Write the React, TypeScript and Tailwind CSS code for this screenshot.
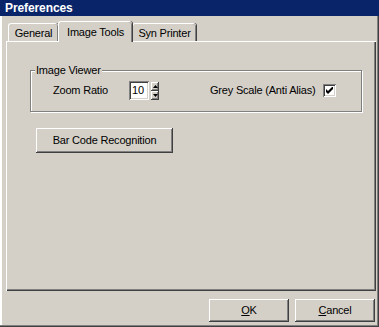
import React from "react";

const raised =
  "bg-[#d4d0c8] shadow-[inset_-1px_-1px_#404040,inset_1px_1px_#fff,inset_-2px_-2px_#808080,inset_2px_2px_#d4d0c8]";
const sunken =
  "shadow-[inset_1px_1px_#808080,inset_-1px_-1px_#fff,inset_2px_2px_#404040,inset_-2px_-2px_#d4d0c8]";

const Tab = ({ label, active, width }: { label: string; active?: boolean; width: string }) => (
  <div
    className={`${width} relative flex justify-center rounded-t-[3px] border-l border-t border-white shadow-[inset_-1px_0_#808080,1px_0_#404040] ${
      active ? "z-10 -mb-px h-[21px] pt-[4px]" : "h-[18px] pt-[3px]"
    } bg-[#d4d0c8]`}
  >
    {label}
  </div>
);

const SpinButton = ({ up }: { up?: boolean }) => (
  <div className={`flex h-[9px] w-[8px] items-center justify-center ${raised}`}>
    <svg width="5" height="3" viewBox="0 0 5 3">
      {up ? <path d="M2.5 0 L5 3 L0 3 Z" fill="#000" /> : <path d="M0 0 L5 0 L2.5 3 Z" fill="#000" />}
    </svg>
  </div>
);

export default function App() {
  return (
    <div
      className="flex h-[327px] w-[379px] flex-col bg-[#d4d0c8] text-[11px] leading-[13px] tracking-[-0.2px] text-black shadow-[inset_-1px_-1px_#404040,inset_-2px_-2px_#808080,inset_2px_0_#fff]"
      style={{ fontFamily: '"Liberation Sans", Arial, sans-serif' }}
    >
      <div className="flex h-[16px] items-center bg-[#0a246a] pl-[5px] text-[12px] font-bold tracking-[-0.1px] text-white">
        Preferences
      </div>

      <div className="flex flex-col pl-[6px] pr-[3px] pt-[5px]">
        <div className="flex h-[20px] items-end pl-[2px]">
          <Tab label="General" width="w-[50px]" />
          <Tab label="Image Tools" width="w-[74px]" active />
          <Tab label="Syn Printer" width="w-[64px]" />
        </div>

        <div className="h-[250px] border-l border-t border-white pl-[23px] pt-[28px] shadow-[inset_-1px_-1px_#404040,inset_-2px_-2px_#808080]">
          <div className="relative h-[42px] w-[332px] border border-[#808080] shadow-[1px_1px_#fff,inset_1px_1px_#fff]">
            <span className="absolute left-[4px] top-[-7px] bg-[#d4d0c8] px-[1px]">Image Viewer</span>
            <div className="flex items-center pl-[22px] pt-[10px]">
              <span className="w-[76px]">Zoom Ratio</span>
              <div className={`flex h-[19px] w-[20px] items-center bg-white pl-[3px] ${sunken}`}>10</div>
              <div className="ml-[2px] flex flex-col">
                <SpinButton up />
                <SpinButton />
              </div>
              <span className="ml-[51px] w-[113px]">Grey Scale (Anti Alias)</span>
              <div className={`flex h-[13px] w-[13px] items-center justify-center bg-white ${sunken}`}>
                <svg width="7" height="7" viewBox="0 0 7 7">
                  <path d="M0 2 L2 4 L7 -1 L7 2 L2 7 L0 5 Z" fill="#000" />
                </svg>
              </div>
            </div>
          </div>

          <button className={`ml-[6px] mt-[16px] flex h-[25px] w-[137px] items-center justify-center ${raised}`}>
            Bar Code Recognition
          </button>
        </div>
      </div>

      <div className="flex justify-end gap-[6px] pr-[4px] pt-[8px]">
        <button className={`flex h-[23px] w-[80px] items-center justify-center ${raised}`}>
          <span className="underline underline-offset-[1px]">O</span>K
        </button>
        <button className={`flex h-[23px] w-[80px] items-center justify-center ${raised}`}>
          <span className="underline underline-offset-[1px]">C</span>ancel
        </button>
      </div>
    </div>
  );
}
